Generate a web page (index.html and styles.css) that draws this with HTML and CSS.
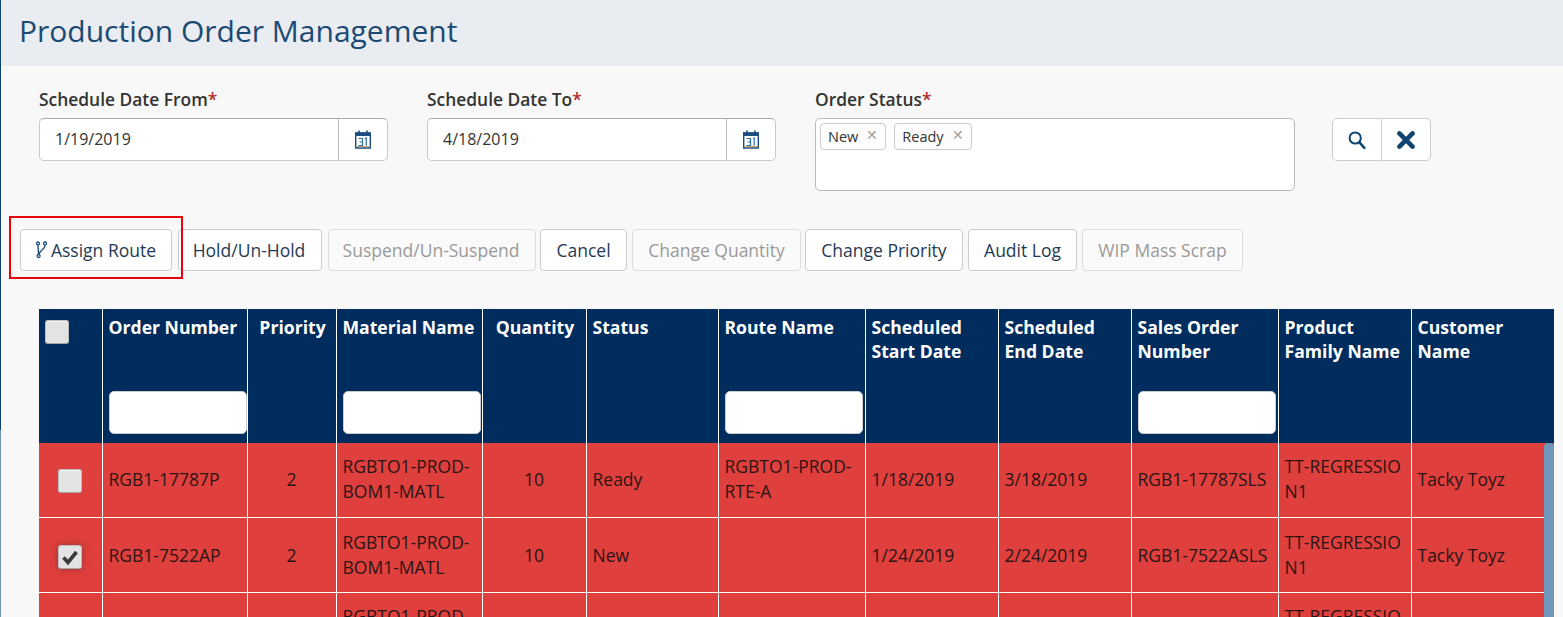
FILE: index.html
```html
<!DOCTYPE html>
<html lang="en">
<head>
    <meta charset="UTF-8">
    <title>Production Order Management</title>
    <link rel="stylesheet" href="styles.css">
</head>
<body>
    <header class="page-title">
        <h1>Production Order Management</h1>
    </header>

    <!-- Filters -->
    <section class="filters">
        <div class="field">
            <label>Schedule Date From<span class="req">*</span></label>
            <div class="date-input">
                <span class="date-value">1/19/2019</span>
                <span class="date-btn">
                    <svg width="18" height="19" viewBox="0 0 18 19"><path d="M1.700 3h14.600v15H1.700z" fill="#fff" stroke="#1c4f80" stroke-width="1.400"/><path d="M1 2.500h16v3.500H1z" fill="#1c4f80"/><path d="M5 0.500v3M13 0.500v3" stroke="#1c4f80" stroke-width="1.600"/><path d="M4.500 8.500h4v7h-4M5.500 12h3M11 8.500l1.200-.5v7.500" fill="none" stroke="#2a6fa8" stroke-width="1.200"/><path d="M3 16.700h12" stroke="#b98a4a" stroke-width="1"/></svg>
                </span>
            </div>
        </div>
        <div class="field">
            <label>Schedule Date To<span class="req">*</span></label>
            <div class="date-input">
                <span class="date-value">4/18/2019</span>
                <span class="date-btn">
                    <svg width="18" height="19" viewBox="0 0 18 19"><path d="M1.700 3h14.600v15H1.700z" fill="#fff" stroke="#1c4f80" stroke-width="1.400"/><path d="M1 2.500h16v3.500H1z" fill="#1c4f80"/><path d="M5 0.500v3M13 0.500v3" stroke="#1c4f80" stroke-width="1.600"/><path d="M4.500 8.500h4v7h-4M5.500 12h3M11 8.500l1.200-.5v7.500" fill="none" stroke="#2a6fa8" stroke-width="1.200"/><path d="M3 16.700h12" stroke="#b98a4a" stroke-width="1"/></svg>
                </span>
            </div>
        </div>
        <div class="field field-status">
            <label>Order Status<span class="req">*</span></label>
            <div class="tag-box">
                <span class="tag">New <span class="tag-x">✕</span></span>
                <span class="tag">Ready <span class="tag-x">✕</span></span>
            </div>
        </div>
        <div class="search-btns">
            <button class="icon-btn">
                <svg width="20" height="20" viewBox="0 0 20 20"><circle cx="8.200" cy="8" r="5.600" fill="none" stroke="#0f4372" stroke-width="2"/><path d="M12.400 12.400l5 5.400" stroke="#0f4372" stroke-width="2.600" stroke-linecap="round"/></svg>
            </button>
            <button class="icon-btn">
                <svg width="20" height="20" viewBox="0 0 20 20"><path d="M3.400 3.400l13.200 13.200M16.600 3.400L3.400 16.600" stroke="#0f4372" stroke-width="4.600" stroke-linecap="round"/></svg>
            </button>
        </div>
    </section>

    <!-- Actions -->
    <section class="actions">
        <span class="highlight"></span>
        <button class="btn btn-assign">
            <svg width="11" height="18" viewBox="0 0 11 18"><circle cx="2" cy="2.500" r="1.500" fill="none" stroke="#1c4f80" stroke-width="1.300"/><circle cx="9" cy="2.500" r="1.500" fill="none" stroke="#1c4f80" stroke-width="1.300"/><circle cx="2.600" cy="15" r="1.500" fill="none" stroke="#1c4f80" stroke-width="1.300"/><path d="M2 4.200l.5 9.200M9 4.200C9 8.500 4.500 8.500 2.800 13.200" fill="none" stroke="#1c4f80" stroke-width="1.400"/></svg>
            Assign Route
        </button>
        <button class="btn btn-hold">Hold/Un-Hold</button>
        <button class="btn btn-suspend" disabled>Suspend/Un-Suspend</button>
        <button class="btn btn-cancel">Cancel</button>
        <button class="btn btn-qty" disabled>Change Quantity</button>
        <button class="btn btn-priority">Change Priority</button>
        <button class="btn btn-audit">Audit Log</button>
        <button class="btn btn-scrap" disabled>WIP Mass Scrap</button>
    </section>

    <!-- Orders grid -->
    <div class="grid-wrap">
        <table class="grid">
            <colgroup>
                <col class="c-check"><col class="c-order"><col class="c-prio"><col class="c-mat"><col class="c-qty"><col class="c-status"><col class="c-route"><col class="c-start"><col class="c-end"><col class="c-sales"><col class="c-family"><col class="c-cust">
            </colgroup>
            <thead>
                <tr>
                    <th><span class="check check-head"></span></th>
                    <th>Order Number<input class="col-filter" type="text"></th>
                    <th class="center">Priority</th>
                    <th>Material Name<input class="col-filter" type="text"></th>
                    <th class="center">Quantity</th>
                    <th>Status</th>
                    <th>Route Name<input class="col-filter" type="text"></th>
                    <th>Scheduled Start Date</th>
                    <th>Scheduled End Date</th>
                    <th>Sales Order Number<input class="col-filter" type="text"></th>
                    <th>Product Family Name</th>
                    <th>Customer Name</th>
                </tr>
            </thead>
            <tbody>
                <tr>
                    <td class="center"><span class="check check-row"></span></td>
                    <td>RGB1-17787P</td>
                    <td class="center">2</td>
                    <td>RGBTO1-PROD-BOM1-MATL</td>
                    <td class="center">10</td>
                    <td>Ready</td>
                    <td>RGBTO1-PROD-RTE-A</td>
                    <td>1/18/2019</td>
                    <td>3/18/2019</td>
                    <td>RGB1-17787SLS</td>
                    <td class="wrap-any">TT-REGRESSION1</td>
                    <td>Tacky Toyz</td>
                </tr>
                <tr>
                    <td class="center"><span class="check check-row is-checked"><svg width="18" height="18" viewBox="0 0 18 18"><path d="M2.500 9.500l4.500 5L15.500 4" fill="none" stroke="#3a3a3a" stroke-width="3.600"/></svg></span></td>
                    <td>RGB1-7522AP</td>
                    <td class="center">2</td>
                    <td>RGBTO1-PROD-BOM1-MATL</td>
                    <td class="center">10</td>
                    <td>New</td>
                    <td></td>
                    <td>1/24/2019</td>
                    <td>2/24/2019</td>
                    <td>RGB1-7522ASLS</td>
                    <td class="wrap-any">TT-REGRESSION1</td>
                    <td>Tacky Toyz</td>
                </tr>
                <tr>
                    <td></td>
                    <td></td>
                    <td></td>
                    <td>RGBTO1-PROD-BOM1-MATL</td>
                    <td></td>
                    <td></td>
                    <td></td>
                    <td></td>
                    <td></td>
                    <td></td>
                    <td class="wrap-any">TT-REGRESSION1</td>
                    <td></td>
                </tr>
            </tbody>
        </table>
        <span class="scroll-thumb"></span>
    </div>
</body>
</html>
```

FILE: styles.css
```css
/* Global */
html, body {
    height: 617px;
    overflow: hidden;
}

body {
    margin: 0;
    background: #f8f8f8;
    font-family: "Open Sans", sans-serif;
    font-size: 17.5px;
    color: #333;
    border-left: 1px solid #0f4372;
    border-image: linear-gradient(#0f4372 430px, #6f97bd 430px) 1;
}

button {
    font-family: inherit;
}

/* Title bar */
.page-title {
    height: 66px;
    box-sizing: border-box;
    background: #e9ecf1;
    padding: 0 0 6px 18px;
    display: flex;
    align-items: center;
}

.page-title h1 {
    margin: 0;
    font-size: 30px;
    font-weight: 400;
    color: #1c4a72;
}

/* Filters */
.filters {
    display: flex;
    align-items: flex-start;
    padding: 20px 0 0 38px;
    height: 142px;
    box-sizing: border-box;
    gap: 39px;
}

.field label {
    display: block;
    height: 32px;
    line-height: 27px;
    font-size: 17.400px;
    font-weight: 600;
    color: #333;
}

.req {
    color: #b52a2a;
}

.date-input {
    display: flex;
    width: 349px;
    height: 43px;
    box-sizing: border-box;
    background: #fff;
    border: 1px solid #c9c9c9;
    border-top-color: #aaa;
    border-radius: 5px;
}

.date-value {
    flex: 1;
    padding-left: 15px;
    line-height: 40px;
    font-size: 16px;
    border-right: 1px solid #c0c0c0;
}

.date-btn {
    width: 48px;
    display: flex;
    align-items: center;
    justify-content: center;
}

.tag-box {
    width: 480px;
    height: 73px;
    box-sizing: border-box;
    padding: 4px 4px;
    display: flex;
    align-items: flex-start;
    gap: 8px;
    background: #fff;
    border: 1px solid #bbb;
    border-radius: 5px;
}

.tag {
    height: 27px;
    box-sizing: border-box;
    padding: 0 7px;
    display: flex;
    align-items: center;
    gap: 8px;
    font-size: 14.500px;
    background: #fdfdfd;
    border: 1px solid #ccc;
    border-radius: 4px;
}

.tag-x {
    color: #a0a0a0;
    font-size: 14px;
    line-height: 20px;
    margin-top: -3px;
}

.search-btns {
    display: flex;
    margin: 32px 0 0 -2px;
}

.icon-btn {
    width: 50px;
    height: 43px;
    padding: 0;
    display: flex;
    align-items: center;
    justify-content: center;
    background: #fff;
    border: 1px solid #ccc;
    border-radius: 5px 0 0 5px;
}

.icon-btn + .icon-btn {
    width: 49px;
    border-left: 0;
    border-radius: 0 5px 5px 0;
}

/* Action buttons */
.actions {
    position: relative;
    display: flex;
    padding-left: 19px;
    height: 80px;
    box-sizing: border-box;
    padding-top: 21px;
    align-items: flex-start;
}

.highlight {
    position: absolute;
    left: 8px;
    top: 8px;
    width: 174px;
    height: 63px;
    box-sizing: border-box;
    border: 2px solid #e8060c;
}

.btn {
    height: 42px;
    padding: 0;
    font-size: 17.500px;
    color: #1f3a55;
    background: #fff;
    border: 1px solid #ccc;
    border-radius: 4px;
    display: flex;
    align-items: center;
    justify-content: center;
}

.btn:disabled {
    color: #999;
    background: #fafafa;
    border-color: #ddd;
}

.btn-assign { width: 152px; margin-right: 6px; gap: 4px; }
.btn-hold { width: 144px; margin-right: 6px; padding-right: 2px; }
.btn-suspend { width: 208px; margin-right: 4px; padding-right: 2px; }
.btn-cancel { width: 87px; margin-right: 5px; }
.btn-qty { width: 169px; margin-right: 4px; }
.btn-priority { width: 158px; margin-right: 5px; }
.btn-audit { width: 109px; margin-right: 5px; }
.btn-scrap { width: 161px; }

/* Grid */
.grid-wrap {
    position: relative;
    margin: 21px 0 0 38px;
    width: 1515px;
}

.grid {
    width: 1515px;
    table-layout: fixed;
    border-collapse: collapse;
}

.c-check { width: 63px; }
.c-order { width: 145px; }
.c-prio { width: 89px; }
.c-mat { width: 146px; }
.c-qty { width: 104px; }
.c-status { width: 132px; }
.c-route { width: 147px; }
.c-start { width: 133px; }
.c-end { width: 133px; }
.c-sales { width: 147px; }
.c-family { width: 133px; }
.c-cust { width: 143px; }

.grid th {
    height: 134px;
    box-sizing: border-box;
    padding: 6px 6px 0;
    position: relative;
    vertical-align: top;
    text-align: left;
    font-size: 17.600px;
    font-weight: 700;
    line-height: 24px;
    color: #fff;
    background: #002d5e;
    border-left: 1px solid #fff;
}

.grid th.center {
    padding-left: 8px;
}

.grid th:first-child,
.grid td:first-child {
    border-left: 0;
}

.grid td {
    height: 75px;
    box-sizing: border-box;
    padding: 0 6px 1px;
    font-size: 17.500px;
    line-height: 25px;
    color: #2a1513;
    background: #df3f3d;
    border-left: 1px solid #fff;
    border-bottom: 1px solid #fff;
}

.grid tbody tr:first-child td {
    height: 74px;
}

.grid tbody tr:nth-child(2) td {
    padding: 1px 6px 0;
}

.grid .center {
    text-align: center;
}

.wrap-any {
    word-break: break-all;
}

/* the filter box sits at the bottom of its header cell */
.col-filter {
    position: absolute;
    left: 6px;
    bottom: 9px;
    width: 138px;
    height: 43px;
    box-sizing: border-box;
    background: #fff;
    border: 1px solid #ccc;
    border-radius: 5px;
}

.check {
    display: inline-flex;
    align-items: center;
    justify-content: center;
    width: 24px;
    height: 24px;
    box-sizing: border-box;
    vertical-align: middle;
    background: #e3e3e3;
    border: 1px solid #bdbdbd;
    border-bottom-color: #a5a5a5;
    border-radius: 3px;
    box-shadow: inset 0 1px 1px #f5f5f5;
}

.check-head {
    margin-top: 5px;
}

.check-row {
    margin-top: 4px;
}

.is-checked {
    box-shadow: 0 0 6px rgba(90, 50, 50, 0.6);
}

.scroll-thumb {
    position: absolute;
    right: 0;
    top: 134px;
    bottom: 0;
    width: 10px;
    background: #7097b9;
    border-radius: 4px 4px 0 0;
}
```
